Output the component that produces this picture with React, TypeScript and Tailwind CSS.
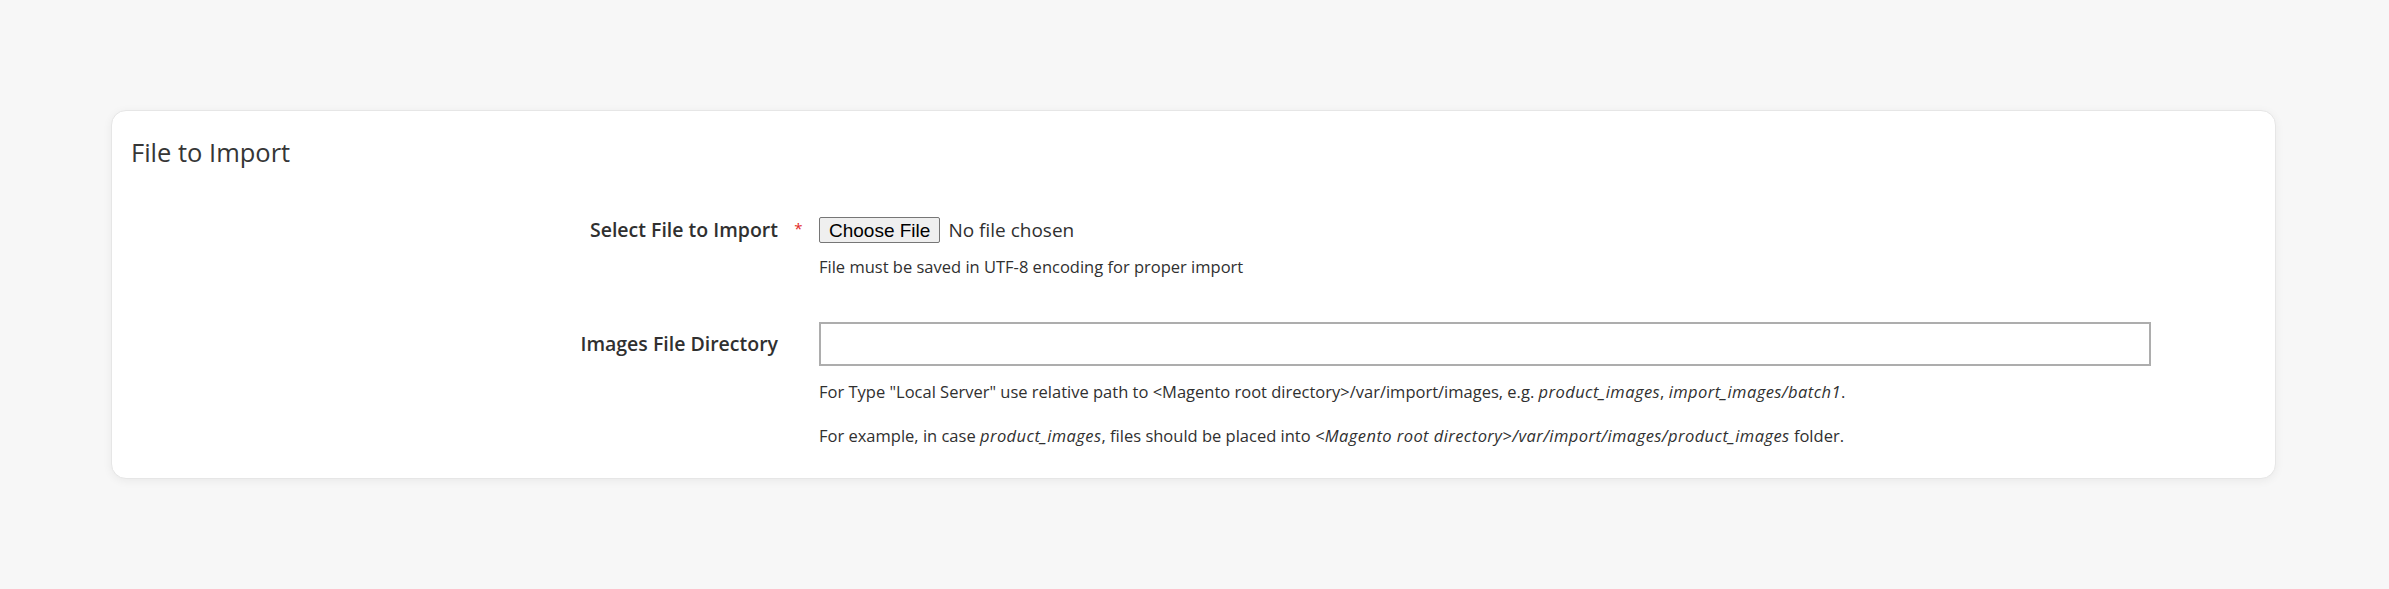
const sans = "font-['Open_Sans',_'Noto_Sans',_sans-serif]";

const App: React.FC = () => {
  return (
    <div className={`min-h-[589px] w-full bg-[#f7f7f7] pt-[110px] pb-[112px] ${sans}`}>
      {/* Card */}
      <div className="ml-[111px] mr-[113px] rounded-[15px] border border-[#e6e6e6] bg-white pt-[24px] pb-[31px] shadow-[0_2px_10px_rgba(0,0,0,0.06)]">
        <h2 className="pl-[19px] text-[25.5px] leading-[34px] text-[#363636]">File to Import</h2>

        {/* Select file row */}
        <div className="mt-[48px] flex items-center">
          <div className="flex w-[666px] justify-end">
            <span className="text-[19.5px] font-semibold leading-[26px] text-[#303030]">Select File to Import</span>
          </div>
          <div className="flex w-[41px] justify-center">
            <span className="-mt-[4px] text-[15px] leading-none text-[#e22626]">*</span>
          </div>
          <div className="flex items-center">
            <button className="h-[26px] rounded-[2px] border border-[#767676] bg-[#efefef] px-[9px] font-['Liberation_Sans',_Arial,_sans-serif] text-[19px] leading-none text-black">
              Choose File
            </button>
            <span className="ml-[8px] text-[19px] leading-[26px] text-[#303030]">No file chosen</span>
          </div>
        </div>
        <div className="mt-[13px] pl-[707px] text-[16.5px] leading-[22px] text-[#303030]">
          File must be saved in UTF-8 encoding for proper import
        </div>

        {/* Images directory row */}
        <div className="mt-[44px] flex items-center">
          <div className="flex w-[666px] justify-end">
            <span className="text-[19.5px] font-semibold leading-[26px] text-[#303030]">Images File Directory</span>
          </div>
          <div className="w-[41px]"></div>
          <input
            type="text"
            className="h-[44px] w-[1332px] border-2 border-[#adadad] bg-white px-3 outline-none"
          />
        </div>
        <div className="mt-[15px] pl-[707px] text-[16.5px] leading-[22px] text-[#303030]">
          For Type "Local Server" use relative path to &lt;Magento root directory&gt;/var/import/images, e.g.{" "}
          <i className="tracking-[0.43px]">product_images</i>, <i className="tracking-[0.43px]">import_images/batch1</i>.
        </div>
        <div className="mt-[22px] pl-[707px] text-[16.5px] leading-[22px] text-[#303030]">
          For example, in case <i className="tracking-[0.43px]">product_images</i>, files should be placed into{" "}
          <i className="tracking-[0.43px]">&lt;Magento root directory&gt;/var/import/images/product_images</i> folder.
        </div>
      </div>
    </div>
  );
};

export default App;
